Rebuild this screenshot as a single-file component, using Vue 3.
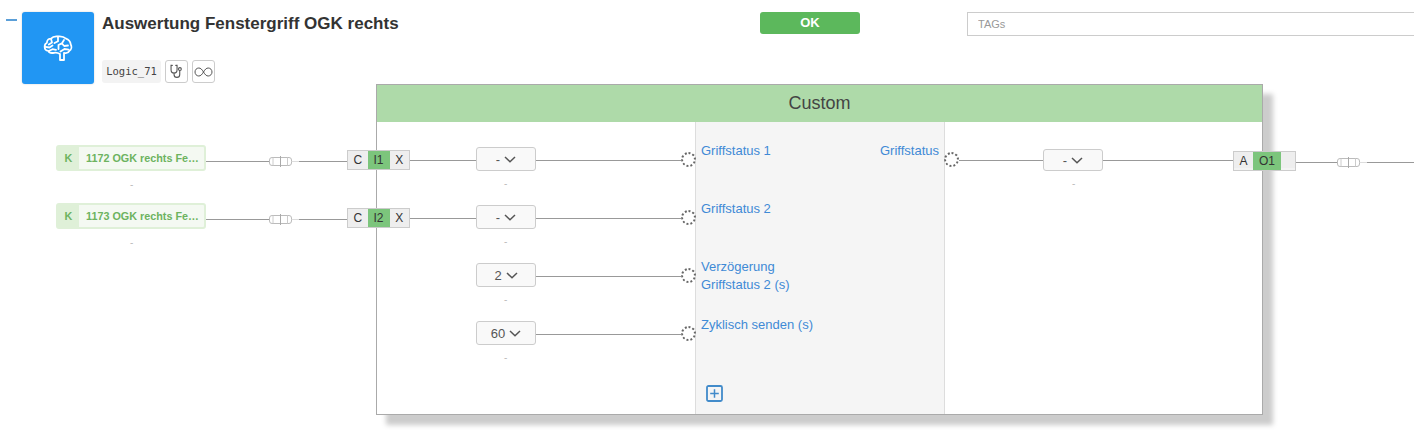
<script setup>
const px = (v) => v + 'px'
const place = (x, y, w, h) => ({ left: px(x), top: px(y), width: w ? px(w) : undefined, height: h ? px(h) : undefined })

const wires = [
  [206, 161, 141], [206, 219, 141],
  [410, 160, 66], [410, 218, 66],
  [536, 160, 145], [536, 218, 145], [536, 276, 145], [536, 334, 145],
  [959, 160, 84], [1103, 160, 130], [1296, 162, 118]
]
const connectors = [[269, 156], [269, 214], [1337, 157]]
const sources = [
  { y: 145, label: '1172 OGK rechts Fe…' },
  { y: 203, label: '1173 OGK rechts Fe…' }
]
const inputs = [
  { y: 150, name: 'I1' },
  { y: 208, name: 'I2' }
]
const selects = [
  { x: 476, y: 147, h: 24, value: '-' },
  { x: 476, y: 205, h: 24, value: '-' },
  { x: 476, y: 263, h: 24, value: '2' },
  { x: 476, y: 321, h: 24, value: '60' },
  { x: 1043, y: 149, h: 22, value: '-' }
]
const dashes = [[130, 179], [130, 237], [504, 178], [504, 236], [504, 294], [504, 352], [1072, 178]]
const ports = [[681, 152], [681, 210], [681, 268], [681, 326], [944, 152]]
const labels = [
  { y: 142, text: 'Griffstatus 1' },
  { y: 200, text: 'Griffstatus 2' },
  { y: 258, text: 'Verzögerung\nGriffstatus 2 (s)' },
  { y: 316, text: 'Zyklisch senden (s)' }
]
</script>

<template>
  <div class="page">
    <header class="head">
      <span class="collapse"></span>
      <div class="tile">
        <svg width="30" height="26" viewBox="0 0 30 26" fill="none" stroke="#fff" stroke-width="1.8" stroke-linecap="round" stroke-linejoin="round">
          <path d="M17 25V19C15 17.8 13 17.3 11 17.8C8 18.4 6 17.5 5.3 15.8C3 15.6 1.6 13.8 1.7 11.6C1.7 9.8 2.6 8.4 3.9 7.8C3.9 5.2 5.8 3.6 8 3.6C9.5 1.8 12.4 1.2 15 1.5C18 1.2 21 1.8 23 3.7C25.8 4.6 27.4 7 27.8 9.6C28.9 11.8 28.4 14.7 26.4 15.8C25.4 17.8 23 18.4 21 17.8V25H17Z"/>
          <path d="M15 1.7V6.2M15 6.2L11.5 8M8 3.8L9 7.6L5.8 9.5M2.4 11.8L6.5 12.5L9.5 10.5M6.2 15.7L9.5 14.2L13 14.8M21 5L18.8 8.4L21.2 11L25 10.5M18.8 8.4L15.5 10V14M25.6 14.6L21.5 14L17.5 16.5"/>
        </svg>
      </div>
      <div class="info">
        <h1 class="title">Auswertung Fenstergriff OGK rechts</h1>
        <div class="meta">
          <code class="logic">Logic_71</code>
          <button class="icon-btn">
            <svg width="15" height="15" viewBox="0 0 19 19" fill="none" stroke="#555" stroke-width="1.4" stroke-linecap="round">
              <path d="M4.2 1.8H2.6V7.2C2.6 9.8 4.2 11.4 6.4 11.4C8.6 11.4 10.2 9.8 10.2 7.2V1.8H8.6"/>
              <path d="M6.4 11.4V13.2C6.4 15.6 8 17 10 17C12.2 17 13.6 15.4 13.6 13.2V8.4"/>
              <circle cx="13.8" cy="6.4" r="1.8"/>
            </svg>
          </button>
          <button class="icon-btn">
            <svg width="19" height="12" viewBox="0 0 19 12" fill="none" stroke="#555" stroke-width="1">
              <path d="M9.5 6C8 3.4 6.6 2 4.8 2C2.6 2 1 3.8 1 6C1 8.2 2.6 10 4.8 10C6.6 10 8 8.6 9.5 6C11 3.4 12.4 2 14.2 2C16.4 2 18 3.8 18 6C18 8.2 16.4 10 14.2 10C12.4 10 11 8.6 9.5 6Z"/>
            </svg>
          </button>
        </div>
      </div>
      <div class="status">OK</div>
      <input class="tags" placeholder="TAGs" />
    </header>

    <section class="canvas">
      <div class="panel">
        <div class="panel-title">Custom</div>
        <div class="panel-body">
          <div class="col-left"></div>
          <div class="col-mid"></div>
          <div class="col-right"></div>
        </div>
      </div>

      <div v-for="(w, i) in wires" :key="'w' + i" class="wire" :style="place(w[0], w[1], w[2])"></div>

      <svg v-for="(c, i) in connectors" :key="'c' + i" class="connector" :style="place(c[0], c[1])" width="30" height="11" viewBox="0 0 30 11" fill="none">
        <rect x="0.5" y="1.5" width="22" height="8" rx="2.5" fill="#fff" stroke="#bbb"/>
        <path d="M4 1.5V9.5M18.5 1.5V9.5" stroke="#ccc"/>
        <path d="M11.5 0V11" stroke="#aaa"/>
        <path d="M22.5 5.5H30" stroke="#ddd"/>
      </svg>

      <div v-for="s in sources" :key="s.y" class="source" :style="place(56, s.y)">
        <span class="source-k">K</span>
        <span class="source-label">{{ s.label }}</span>
      </div>

      <div v-for="n in inputs" :key="n.name" class="node node-in" :style="place(347, n.y)">
        <span class="cell">C</span>
        <span class="cell on">{{ n.name }}</span>
        <span class="cell">X</span>
      </div>
      <div class="node node-out" :style="place(1233, 151)">
        <span class="cell a">A</span>
        <span class="cell on o">O1</span>
        <span class="cell e"></span>
      </div>

      <div v-for="(s, i) in selects" :key="'s' + i" class="select" :style="place(s.x, s.y, 60, s.h)">
        <span>{{ s.value }}</span>
        <svg width="12" height="7" viewBox="0 0 12 7" fill="none" stroke="#555" stroke-width="1.5"><path d="M1 1L6 5.8L11 1"/></svg>
      </div>

      <span v-for="(d, i) in dashes" :key="'d' + i" class="dash" :style="place(d[0], d[1])">-</span>

      <p v-for="l in labels" :key="l.y" class="port-label" :style="place(701, l.y)">{{ l.text }}</p>
      <p class="port-label" :style="place(880, 142)">Griffstatus</p>

      <span v-for="(p, i) in ports" :key="'p' + i" class="port" :style="place(p[0], p[1])"></span>

      <button class="add" :style="place(706, 385)">
        <svg width="17" height="17" viewBox="0 0 17 17" fill="none" stroke="#428bca">
          <rect x="1" y="1" width="15" height="15" rx="1.5" stroke-width="1.8"/>
          <path d="M8.5 4.2V12.8M4.2 8.5H12.8" stroke-width="1.5"/>
        </svg>
      </button>
    </section>
  </div>
</template>

<style>
html, body { margin: 0; background: #fff; overflow: hidden; }
</style>

<style scoped>
.page {
  position: relative;
  width: 1414px;
  height: 438px;
  overflow: hidden;
  background: #fff;
  font-family: "Liberation Sans", Arial, sans-serif;
  color: #333;
}
.head {
  display: flex;
  align-items: flex-start;
  padding: 12px 0 0 6px;
}
.collapse {
  flex: none;
  width: 11px;
  height: 2px;
  margin: 7px 5px 0 0;
  background: #5b9fd8;
}
.tile {
  flex: none;
  display: flex;
  align-items: center;
  justify-content: center;
  width: 72px;
  height: 72px;
  border-radius: 3px;
  background: #2196f3;
  box-shadow: 0 0 2px rgba(0, 0, 0, .2);
}
.info {
  width: 380px;
  margin-left: 8px;
  flex: none;
}
.title {
  margin: 0;
  font-size: 17px;
  line-height: 24px;
  font-weight: 700;
  color: #333;
  white-space: nowrap;
}
.meta {
  display: flex;
  align-items: center;
  gap: 4px;
  margin-top: 24px;
}
.logic {
  width: 59px;
  height: 23px;
  border-radius: 3px;
  background: #f3f3f3;
  font-family: "DejaVu Sans Mono", "Liberation Mono", monospace;
  font-size: 10.5px;
  line-height: 23px;
  text-align: center;
  color: #444;
}
.icon-btn {
  display: flex;
  align-items: center;
  justify-content: center;
  box-sizing: border-box;
  width: 23px;
  height: 23px;
  padding: 0;
  border: 1px solid #ccc;
  border-radius: 3px;
  background: #fff;
}
.status {
  width: 100px;
  height: 22px;
  margin-left: 278px;
  border-radius: 3px;
  background: #5cb85c;
  color: #fff;
  font-size: 13px;
  font-weight: 700;
  line-height: 22px;
  text-align: center;
  flex: none;
}
.tags {
  box-sizing: border-box;
  width: 460px;
  height: 24px;
  margin-left: 107px;
  padding: 0 10px;
  border: 1px solid #ccc;
  outline: none;
  font: 11px "Liberation Sans", Arial, sans-serif;
  flex: none;
}
.tags::placeholder { color: #999; opacity: 1; }

.canvas {
  position: absolute;
  inset: 0;
  pointer-events: none;
}
.panel {
  position: absolute;
  left: 376px;
  top: 84px;
  box-sizing: border-box;
  display: flex;
  flex-direction: column;
  width: 887px;
  height: 331px;
  border: 1px solid #aaa;
  background: #fff;
  box-shadow: 10px 10px 5px #ccc;
}
.panel-title {
  height: 37px;
  background: #aedaa9;
  color: #444;
  font-size: 18px;
  line-height: 37px;
  text-align: center;
}
.panel-body {
  display: flex;
  flex: 1;
}
.col-left { width: 318px; }
.col-mid {
  box-sizing: border-box;
  width: 250px;
  border: solid #ddd;
  border-width: 0 1px;
  background: #f5f5f5;
}
.col-right { flex: 1; }

.wire {
  position: absolute;
  height: 1px;
  background: #999;
}
.connector { position: absolute; }

.source {
  position: absolute;
  box-sizing: border-box;
  display: flex;
  width: 150px;
  height: 26px;
  border: 2px solid #dff0d8;
  border-radius: 3px;
  background: #f4f9f2;
  font-size: 10.8px;
  font-weight: 700;
  line-height: 22px;
  color: #6db35f;
}
.source-k {
  width: 21px;
  background: #dff0d8;
  text-align: center;
}
.source-label {
  margin-left: 7px;
  white-space: nowrap;
}

.node {
  position: absolute;
  box-sizing: border-box;
  display: flex;
  height: 20px;
  border: 1px solid #ccc;
  background: #eee;
  font-size: 12px;
  line-height: 18px;
  text-align: center;
  color: #333;
}
.node-in { width: 63px; }
.node-out { width: 63px; box-shadow: inset 0 -2px 0 #f3f3f3; }
.cell { flex: 1; }
.on { flex: none; width: 22px; background: #7cc57c; }
.a { flex: none; width: 19px; }
.o { width: 28px; }
.e { flex: none; width: 14px; }

.select {
  position: absolute;
  box-sizing: border-box;
  display: flex;
  align-items: center;
  justify-content: center;
  gap: 4px;
  border: 1px solid #ccc;
  border-radius: 3px;
  background: #f9f9f9;
  font-size: 13px;
  color: #555;
}
.dash {
  position: absolute;
  font-size: 10px;
  line-height: 12px;
  color: #bbb;
}
.port-label {
  position: absolute;
  margin: 0;
  font-size: 13px;
  line-height: 18px;
  color: #3f8ad6;
  white-space: pre;
}
.port {
  position: absolute;
  box-sizing: border-box;
  width: 15px;
  height: 15px;
  border: 2px dotted #666;
  border-radius: 50%;
  background: transparent;
}
.add {
  position: absolute;
  display: flex;
  padding: 0;
  border: 0;
  background: none;
}
</style>
